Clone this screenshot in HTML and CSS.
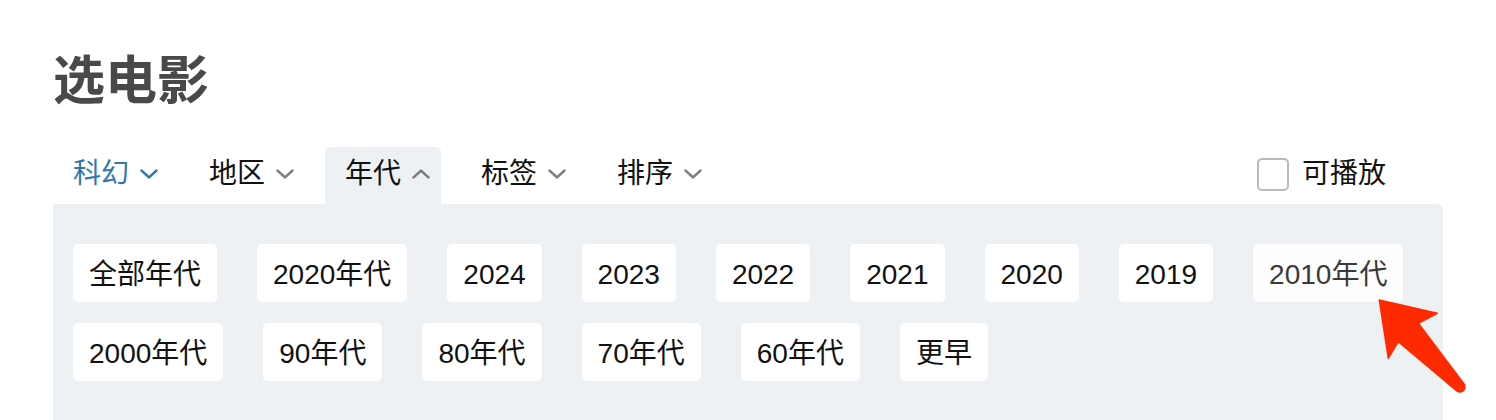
FILE: index.html
```html
<!DOCTYPE html>
<html lang="zh-CN">
<head>
<meta charset="utf-8">
<title>选电影</title>
<link rel="stylesheet" href="styles.css">
</head>
<body>
<div class="page">
  <h1 class="title">选电影</h1>
  <div class="tabs">
    <div class="tab tab-current">科幻<svg class="chev" viewBox="0 0 18 10" width="18" height="10"><path d="M1.6 1.6 L9 8.4 L16.4 1.6"/></svg></div>
    <div class="tab">地区<svg class="chev" viewBox="0 0 18 10" width="18" height="10"><path d="M1.6 1.6 L9 8.4 L16.4 1.6"/></svg></div>
    <div class="tab tab-open">年代<svg class="chev" viewBox="0 0 18 10" width="18" height="10"><path d="M1.6 8.4 L9 1.6 L16.4 8.4"/></svg></div>
    <div class="tab">标签<svg class="chev" viewBox="0 0 18 10" width="18" height="10"><path d="M1.6 1.6 L9 8.4 L16.4 1.6"/></svg></div>
    <div class="tab">排序<svg class="chev" viewBox="0 0 18 10" width="18" height="10"><path d="M1.6 1.6 L9 8.4 L16.4 1.6"/></svg></div>
    <label class="playable"><span class="box"></span>可播放</label>
  </div>
  <div class="panel">
    <div class="chips">
      <span class="chip">全部年代</span>
      <span class="chip">2020年代</span>
      <span class="chip">2024</span>
      <span class="chip">2023</span>
      <span class="chip">2022</span>
      <span class="chip">2021</span>
      <span class="chip">2020</span>
      <span class="chip">2019</span>
      <span class="chip chip-hover">2010年代</span>
      <span class="chip">2000年代</span>
      <span class="chip">90年代</span>
      <span class="chip">80年代</span>
      <span class="chip">70年代</span>
      <span class="chip">60年代</span>
      <span class="chip">更早</span>
    </div>
  </div>
  <svg class="annot-arrow" viewBox="0 0 100 110" width="100" height="110">
    <path d="M9.3 10 L67.3 23.3 L48.3 33.3 L94.6 94.6 Q96 100 91.7 101.5 Q89.5 102.5 87.4 101.4 L28.3 51.7 L18.3 68.3 Z"/>
  </svg>
</div>
</body>
</html>
```

FILE: styles.css
```css
html, body {
  margin: 0;
  padding: 0;
  background: #ffffff;
}

body {
  font-family: "Liberation Sans", "Noto Sans CJK SC", sans-serif;
  color: #111111;
}

.page {
  position: relative;
  width: 1390px;
  padding: 47px 0 0 53px;
}

.title {
  margin: 0;
  font-size: 52px;
  line-height: 60px;
  font-weight: bold;
  color: #494949;
  font-family: "Noto Sans CJK SC", sans-serif;
}

.tabs {
  display: flex;
  align-items: center;
  gap: 20px;
  margin-top: 40px;
  height: 57px;
}

.tab {
  display: flex;
  align-items: center;
  height: 57px;
  box-sizing: border-box;
  padding: 0 11px 4px 20px;
  font-size: 28px;
  line-height: 36px;
  color: #111111;
  border-radius: 5px 5px 0 0;
}

.tab .chev {
  margin-left: 11px;
  fill: none;
  stroke: #7c7c7c;
  stroke-width: 2.6;
  stroke-linecap: round;
  stroke-linejoin: round;
}

.tab-current {
  color: #3377aa;
}

.tab-current .chev {
  stroke: #3377aa;
}

.tab-open {
  background: #eef1f4;
}

.playable {
  margin-left: auto;
  margin-right: 57px;
  display: flex;
  align-items: center;
  font-size: 28px;
  line-height: 36px;
  color: #111111;
  padding-bottom: 3px;
}

.playable .box {
  width: 32px;
  height: 33px;
  box-sizing: border-box;
  border: 2px solid #b9b9b9;
  border-radius: 5px;
  margin-right: 13px;
  margin-left: -2px;
}

.panel {
  background: #eef1f4;
  border-radius: 0 5px 0 0;
  padding: 40px 20px 39px 20px;
}

.chips {
  display: flex;
  flex-wrap: wrap;
  gap: 21px 40px;
}

.chip {
  display: block;
  height: 58px;
  box-sizing: border-box;
  padding: 13px 16px 9px;
  font-size: 28px;
  line-height: 36px;
  background: #ffffff;
  border-radius: 5px;
  color: #111111;
}

.chip-hover {
  background: #fdfdfd;
  color: #3a3a3a;
}

.annot-arrow {
  position: absolute;
  left: 1370px;
  top: 290px;
  fill: #ff2a00;
  stroke: #ff2a00;
  stroke-width: 1.5;
  stroke-linejoin: round;
}
```
